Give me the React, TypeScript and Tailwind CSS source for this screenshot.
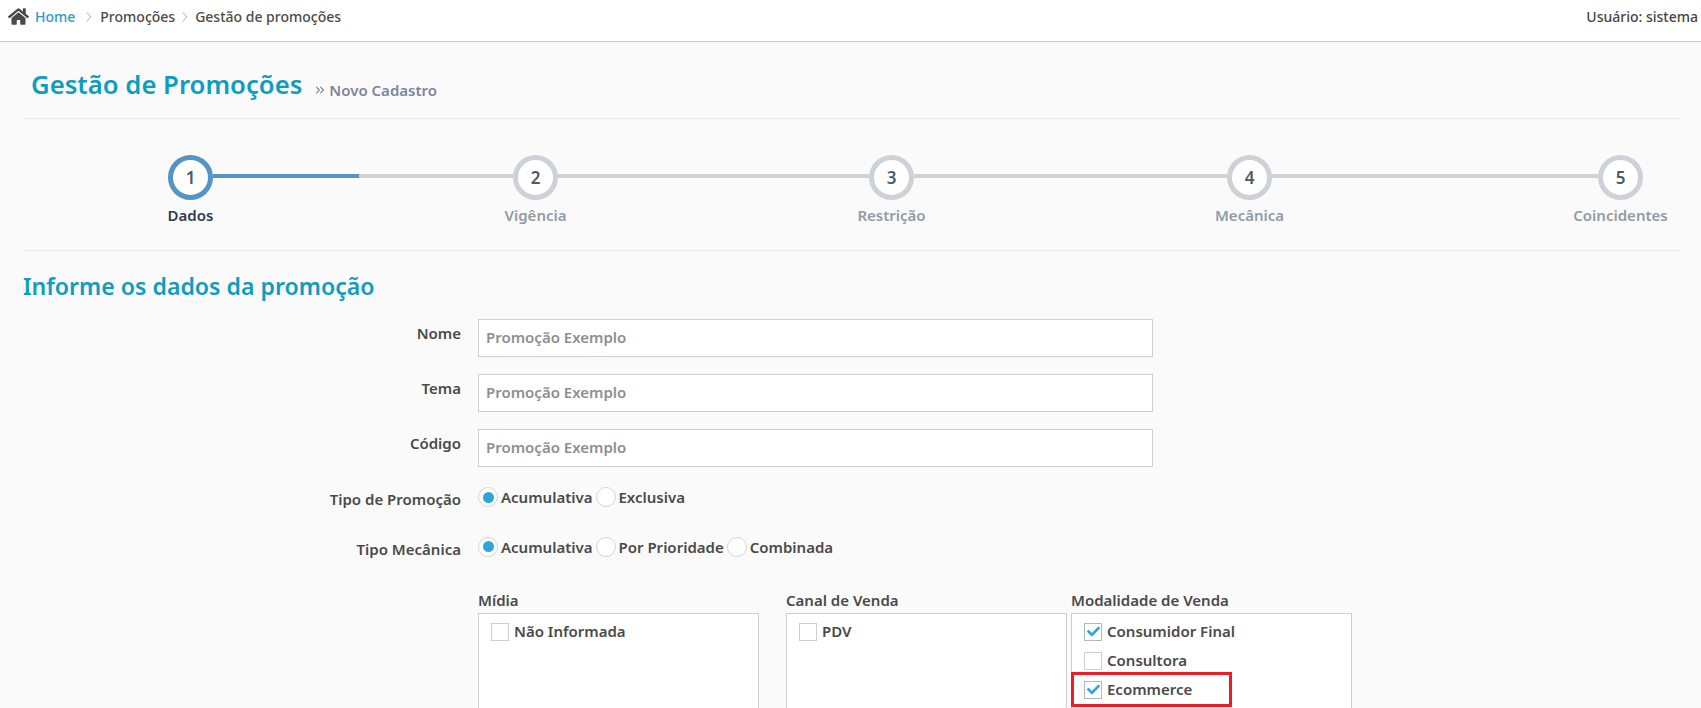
import { FaCheck, FaHome } from "react-icons/fa";
import { ChevronRight, ChevronsRight } from "lucide-react";

const steps = [
  { n: 1, label: "Dados", line: "w-[300px]" },
  { n: 2, label: "Vigência", line: "w-[311px]" },
  { n: 3, label: "Restrição", line: "w-[313px]" },
  { n: 4, label: "Mecânica", line: "w-[326px]" },
  { n: 5, label: "Coincidentes", line: "" },
];

function Step({ n, label }: { n: number; label: string }) {
  const active = n === 1;
  return (
    <div className="flex w-[45px] flex-col items-center">
      <div className={`flex size-[45px] items-center justify-center rounded-full border-[5px] bg-white text-[17px] font-semibold text-[#4c5a6c] ${active ? "border-[#5694c4]" : "border-[#cdd2d8]"}`}>
        {n}
      </div>
      <span className={`mt-1 whitespace-nowrap text-[15px] font-semibold ${active ? "text-[#2f3d50]" : "text-[#929ba6]"}`}>{label}</span>
    </div>
  );
}

function TextRow({ label }: { label: string }) {
  return (
    <div className="flex h-[38px] items-start">
      <label className="mt-[3px] w-[461px] text-right text-[15px] font-semibold text-[#4a4a4a]">{label}</label>
      <input
        readOnly
        value="Promoção Exemplo"
        className="ml-[17px] h-[38px] w-[675px] border border-[#cfcfcf] bg-white px-[7px] pb-[2px] text-[15px] font-semibold text-[#8f8f8f] outline-none"
      />
    </div>
  );
}

function Radio({ label, on }: { label: string; on?: boolean }) {
  return (
    <div className="flex items-center gap-[3px]">
      <span className="flex size-5 items-center justify-center rounded-full border border-[#d5d5d5] bg-white">
        {on && <span className="size-[11px] rounded-full bg-[#2ea6d8]" />}
      </span>
      <span className="text-[15px] font-semibold text-[#4a4a4a]">{label}</span>
    </div>
  );
}

function RadioRow({ label, options }: { label: string; options: string[] }) {
  return (
    <div className="flex items-center">
      <label className="w-[461px] pt-[4px] text-right text-[15px] font-semibold text-[#4a4a4a]">{label}</label>
      <div className="ml-[17px] flex items-center gap-[3px]">
        {options.map((o, i) => (
          <Radio key={o} label={o} on={i === 0} />
        ))}
      </div>
    </div>
  );
}

function Check({ label, on }: { label: string; on?: boolean }) {
  return (
    <div className="flex h-[29px] items-center gap-[5px]">
      <span className={`flex size-[18px] items-center justify-center border bg-white ${on ? "border-[#a9bac8]" : "border-[#cfcfcf]"}`}>
        {on && <FaCheck className="size-[13px] text-[#2ea6d8]" />}
      </span>
      <span className="text-[15px] font-semibold text-[#4a4a4a]">{label}</span>
    </div>
  );
}

function Group({ title, items, className }: { title: string; items: { label: string; on?: boolean }[]; className?: string }) {
  return (
    <div className={`w-[281px] ${className ?? ""}`}>
      <div className="mb-[3px] h-[20px] text-[15px] font-semibold leading-[20px] text-[#4a4a4a]">{title}</div>
      <div className="h-[200px] border border-[#cfcfcf] bg-white px-3 py-[3px]">
        {items.map((it) => (
          <Check key={it.label} label={it.label} on={it.on} />
        ))}
      </div>
    </div>
  );
}

export default function App() {
  return (
    <div className="h-[708px] overflow-hidden bg-[#fafafa] font-['Noto_Sans',sans-serif]">
      <header className="flex h-[42px] items-start justify-between border-b border-[#c8c8c8] bg-white pl-2 pr-[3px] pt-[6px]">
        <nav className="flex items-center text-[14px] font-medium text-[#4a4a4a]">
          <FaHome className="size-[21px] text-[#4a4a4a]" />
          <span className="ml-[6px] text-[#2a9cc4]">Home</span>
          <ChevronRight className="ml-[6px] mr-[3px] size-4 text-[#b5b5b5]" strokeWidth={1.5} />
          <span>Promoções</span>
          <ChevronRight className="mx-[2px] size-4 text-[#b5b5b5]" strokeWidth={1.5} />
          <span>Gestão de promoções</span>
        </nav>
        <span className="text-[14px] font-medium text-[#444]">Usuário: sistema</span>
      </header>

      <div className="mx-[22px] flex h-[77px] items-center border-b border-dotted border-[#d8d8d8] pl-[9px] pt-[10px]">
        <h1 className="text-[25.7px] font-semibold text-[#0f9dbf]">Gestão de Promoções</h1>
        <ChevronsRight className="ml-[11px] mt-[10px] size-[14px] text-[#7f859d]" strokeWidth={2} />
        <span className="ml-[2px] mt-[10px] text-[15px] font-semibold text-[#7f859d]">Novo Cadastro</span>
      </div>

      <div className="mx-[22px] h-[132px] border-b border-dotted border-[#d8d8d8] pl-[146px] pt-[36px]">
        <div className="flex items-start">
          {steps.map((s) => (
            <div key={s.n} className="flex items-start">
              <Step n={s.n} label={s.label} />
              {s.n === 1 && (
                <div className="mt-[19px] flex h-1 w-[300px]">
                  <div className="h-1 w-[146px] bg-[#5694c4]" />
                  <div className="h-1 flex-1 bg-[#cdd2d8]" />
                </div>
              )}
              {s.n > 1 && s.line && <div className={`mt-[19px] h-1 bg-[#cdd2d8] ${s.line}`} />}
            </div>
          ))}
        </div>
      </div>

      <h2 className="ml-[23px] mt-[19px] text-[23.1px] font-semibold leading-[32px] text-[#0f9dbf]">Informe os dados da promoção</h2>

      <div className="mt-[17px] flex flex-col gap-[17px]">
        <TextRow label="Nome" />
        <TextRow label="Tema" />
        <TextRow label="Código" />
      </div>

      <div className="mt-[17px] flex flex-col gap-[23px]">
        <RadioRow label="Tipo de Promoção" options={["Acumulativa", "Exclusiva"]} />
        <RadioRow label="Tipo Mecânica" options={["Acumulativa", "Por Prioridade", "Combinada"]} />
      </div>

      <div className="relative ml-[478px] mt-[30px] flex">
        <Group title="Mídia" items={[{ label: "Não Informada" }]} />
        <Group title="Canal de Venda" items={[{ label: "PDV" }]} className="ml-[27px]" />
        <Group
          title="Modalidade de Venda"
          items={[{ label: "Consumidor Final", on: true }, { label: "Consultora" }, { label: "Ecommerce", on: true }]}
          className="ml-[4px]"
        />
        <div className="absolute left-[593px] top-[82px] h-[35px] w-[161px] border-[3px] border-[#ee1c25]" />
      </div>
    </div>
  );
}
